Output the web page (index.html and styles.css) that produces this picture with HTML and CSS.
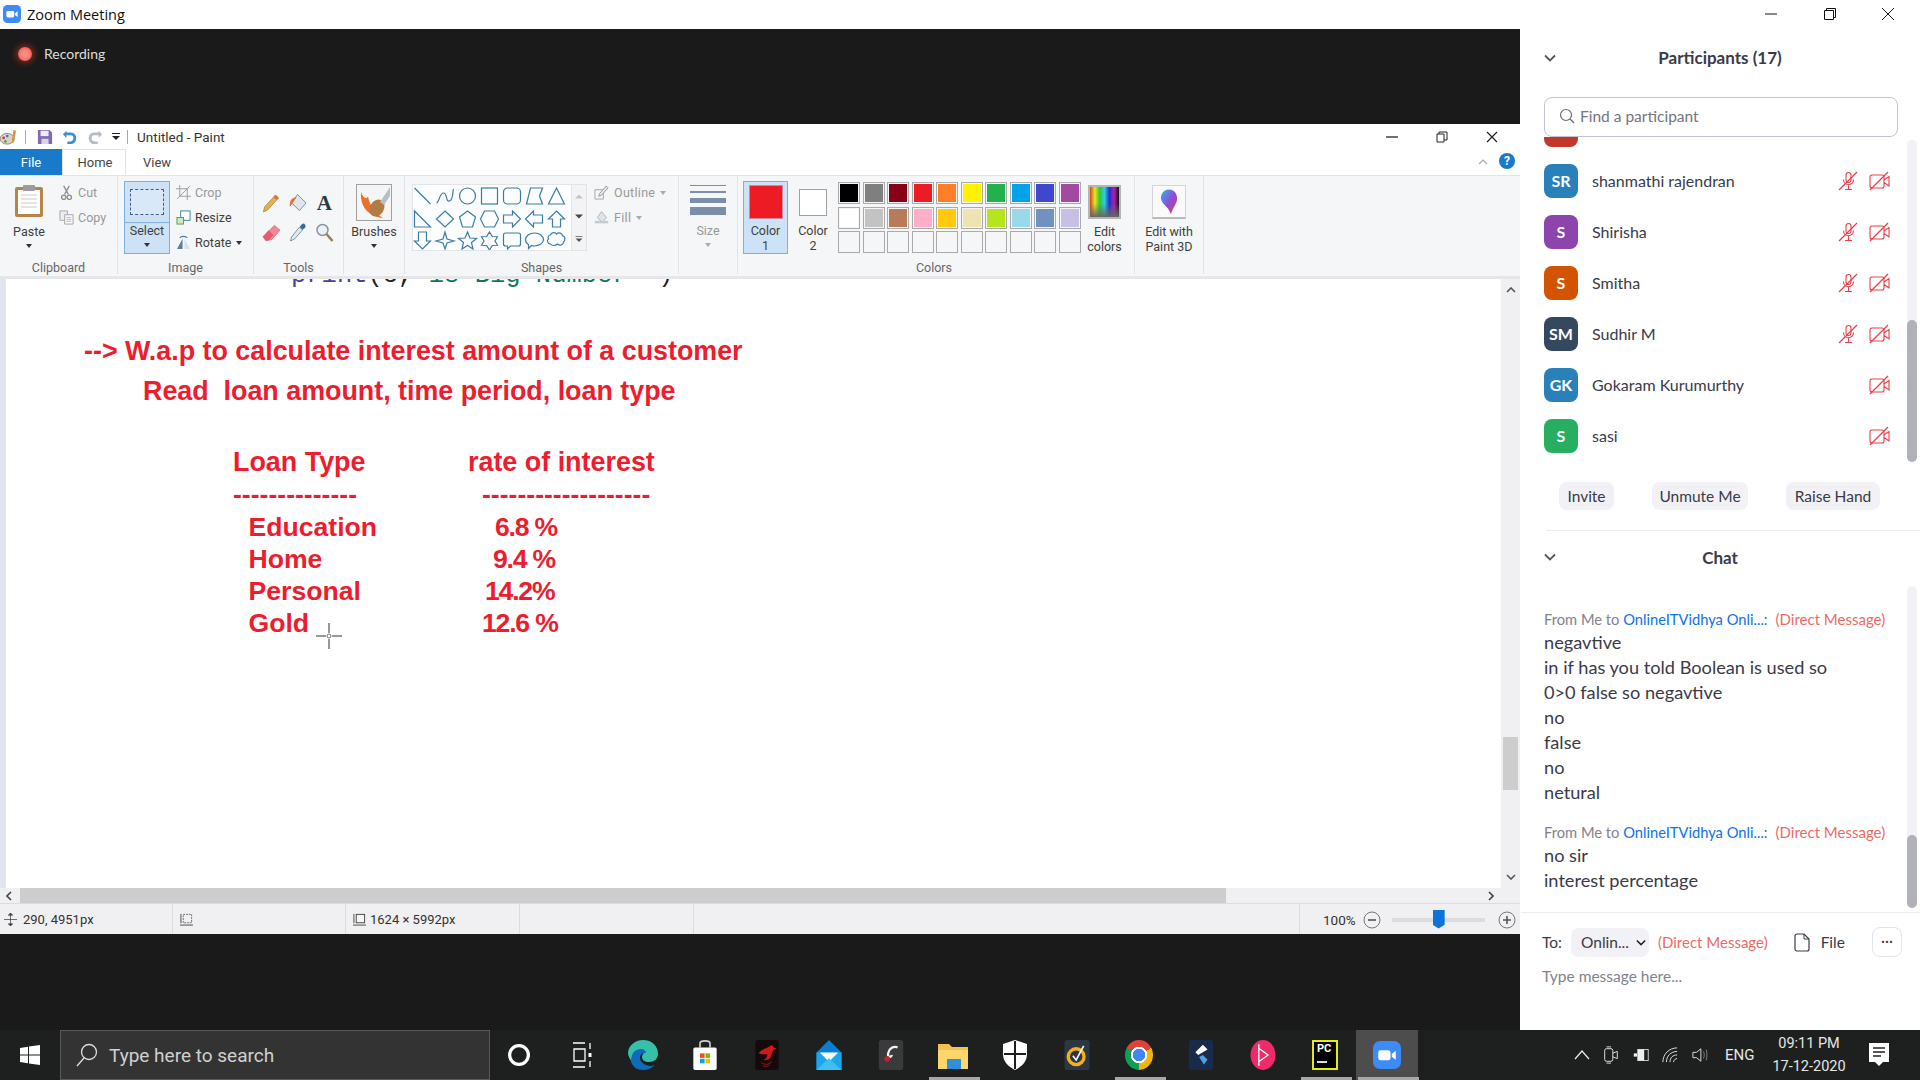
FILE: index.html
```html
<!DOCTYPE html>
<html lang="en">
<head>
    <meta charset="UTF-8">
    <title>Zoom Meeting</title>
    <link rel="stylesheet" href="styles.css">
</head>
<body>
    <svg class="defs" width="0" height="0">
        <symbol id="mic-off" viewBox="0 0 20 20">
            <g fill="none" stroke="#e8404a" stroke-width="1.1">
                <rect x="8" y="1.5" width="5" height="10" rx="2.5"/>
                <path d="M5.5 8.5c0 7 10 7 10 0M10.5 14v4M7 18.5h7"/>
                <path d="M19 1 1 19" stroke-width="1.3"/>
            </g>
        </symbol>
        <symbol id="video-off" viewBox="0 0 21 20">
            <g fill="none" stroke="#e8404a" stroke-width="1.1">
                <path d="M13 4H3a2 2 0 0 0-2 2v9a2 2 0 0 0 2 2h10a2 2 0 0 0 2-2V6a2 2 0 0 0-2-2zM15 9l5-3.500V15l-5-3.500"/>
                <path d="M19 1 1 19" stroke-width="1.300"/>
            </g>
        </symbol>
        <symbol id="chevron" viewBox="0 0 12 8">
            <path d="M1 1.500 6 6.500l5-5" fill="none" stroke="currentColor" stroke-width="1.800"/>
        </symbol>
        <symbol id="zoomcam" viewBox="0 0 32 32">
            <rect width="32" height="32" rx="8" fill="#3d8bf5"/>
            <rect x="6" y="10.500" width="14" height="11.500" rx="2.500" fill="#fff"/>
            <path d="M21.500 14.500 26 11v10.500l-4.500-3.500z" fill="#fff"/>
        </symbol>
    </svg>

    <div class="main">
        <div class="left">
            <div class="zoom-title">
                <svg class="zoom-logo"><use href="#zoomcam"/></svg>
                <span>Zoom Meeting</span>
            </div>
            <div class="rec-bar">
                <span class="rec-dot"></span>
                <span class="rec-text">Recording</span>
            </div>

            <div class="paint">
                <div class="paint-title">
                    <svg class="qa-icon qa-paint" viewBox="0 0 18 18">
                        <ellipse cx="7" cy="11" rx="8" ry="6" fill="#d9d3c4" stroke="#8a8272"/>
                        <circle cx="3" cy="10" r="1.500" fill="#d13b3b"/><circle cx="7" cy="8" r="1.500" fill="#3b78d1"/><circle cx="5" cy="14" r="1.500" fill="#4aa04a"/>
                        <path d="M14 1l3 1-3 14-2-1z" fill="#e2913a"/>
                    </svg>
                    <span class="qa-sep qa-sep-first"></span>
                    <svg class="qa-icon" viewBox="0 0 18 18">
                        <path d="M1 1h13l3 3v13H1z" fill="#7f6bb0"/><rect x="4" y="2" width="9" height="6" fill="#efeaf6"/><rect x="5" y="11" width="8" height="6" fill="#d9d3e8"/>
                    </svg>
                    <svg class="qa-icon" viewBox="0 0 18 18">
                        <path d="M5 2 1 6l4 4V7h5c4 0 4 7-1 7H6v3h4c8 0 8-13 0-13H5z" fill="#3a8fd9"/>
                    </svg>
                    <svg class="qa-icon" viewBox="0 0 18 18">
                        <path d="M13 2l4 4-4 4V7H8c-4 0-4 7 1 7h3v3H8C0 17 0 4 8 4h5z" fill="#b4bcc4"/>
                    </svg>
                    <svg class="qa-drop" viewBox="0 0 8 9"><path d="M0 1h8v1H0zM0 4h8L4 8z" fill="#222"/></svg>
                    <span class="qa-sep"></span>
                    <span class="paint-name">Untitled - Paint</span>
                    <div class="paint-controls">
                        <svg viewBox="0 0 12 12"><path d="M0 6h12" stroke="#222" stroke-width="1.300"/></svg>
                        <svg viewBox="0 0 12 12"><path d="M1 3h7v8H1zM3 3V1h8v8H8" fill="none" stroke="#222"/></svg>
                        <svg viewBox="0 0 12 12"><path d="M1 1l10 10M11 1 1 11" stroke="#222" stroke-width="1.200"/></svg>
                    </div>
                </div>

                <div class="paint-tabs">
                    <span class="tab tab-file">File</span>
                    <span class="tab tab-home">Home</span>
                    <span class="tab tab-view">View</span>
                    <svg class="tab-collapse" viewBox="0 0 10 6"><path d="M1 5l4-4 4 4" fill="none" stroke="#aaa" stroke-width="1.200"/></svg>
                    <span class="tab-help">?</span>
                </div>

                <div class="ribbon">
                    <div class="group g-clip">
                        <div class="group-body">
                            <div class="big-tool paste-tool">
                                <svg class="paste-icon" viewBox="0 0 30 34">
                                    <rect x="1" y="3" width="28" height="30" rx="2" fill="#b5854a"/>
                                    <rect x="4" y="6" width="22" height="24" fill="#fff"/>
                                    <path d="M7 11h16M7 15h16M7 19h16M7 23h16" stroke="#c9c9c9"/>
                                    <rect x="9" y="1" width="12" height="6" rx="1" fill="#9a9aa2"/>
                                </svg>
                                <span>Paste</span>
                                <i class="caret"></i>
                            </div>
                            <div class="small-col">
                                <div class="small-row off">
                                    <svg viewBox="0 0 14 16"><path d="M4 1l5 9M10 1 5 10" stroke="#8d8d8d" stroke-width="1.400" fill="none"/><circle cx="4" cy="13" r="2.300" fill="none" stroke="#8d8d8d" stroke-width="1.400"/><circle cx="10" cy="13" r="2.300" fill="none" stroke="#8d8d8d" stroke-width="1.400"/></svg>
                                    <span>Cut</span>
                                </div>
                                <div class="small-row off">
                                    <svg viewBox="0 0 16 16"><path d="M1 1h8v10H1z" fill="#eee" stroke="#a5a5a5"/><path d="M6 5h9v10H6z" fill="#f8f8f8" stroke="#a5a5a5"/><path d="M8 8h5M8 10h5M8 12h5" stroke="#bbb"/></svg>
                                    <span>Copy</span>
                                </div>
                            </div>
                        </div>
                        <div class="group-label">Clipboard</div>
                    </div>

                    <div class="group g-image">
                        <div class="group-body">
                            <div class="select-tool">
                                <div class="select-top"><span class="marquee"></span></div>
                                <div class="select-bottom">
                                    <span>Select</span>
                                    <i class="caret"></i>
                                </div>
                            </div>
                            <div class="small-col">
                                <div class="small-row off">
                                    <svg viewBox="0 0 16 16"><path d="M4 0v12h12M0 4h12v12M1 15 15 1" fill="none" stroke="#9a9a9a"/></svg>
                                    <span>Crop</span>
                                </div>
                                <div class="small-row">
                                    <svg viewBox="0 0 16 16"><rect x="5" y="1" width="10" height="10" fill="#fff" stroke="#2f7f9a"/><rect x="1" y="8" width="7" height="7" fill="#cfe6c5" stroke="#5d9a4a"/></svg>
                                    <span>Resize</span>
                                </div>
                                <div class="small-row">
                                    <svg viewBox="0 0 16 16"><path d="M7 15H1L7 4z" fill="#5f7f95"/><path d="M9 15h6L9 4z" fill="#d7e3ea"/><path d="M4 3c2-2 6-2 8 0" fill="none" stroke="#2f7f9a" stroke-width="1.300"/></svg>
                                    <span>Rotate</span>
                                    <i class="caret caret-inline"></i>
                                </div>
                            </div>
                        </div>
                        <div class="group-label">Image</div>
                    </div>

                    <div class="group g-tools">
                        <div class="tools-grid">
                            <svg viewBox="0 0 18 20"><path d="M13 2l3 3L5 17l-4 2 1-5z" fill="#e7b04a" stroke="#9c7a30" stroke-width=".7"/><path d="M13 2l3 3-2 2-3-3z" fill="#e06a5a"/></svg>
                            <svg viewBox="0 0 20 20"><path d="M10 1l9 9-7 8-8-8z" fill="#dfe7ee" stroke="#7b8a97"/><path d="M9 4C4 4 1 8 2 14l3-4z" fill="#e0763c"/></svg>
                            <span class="tool-a">A</span>
                            <svg viewBox="0 0 20 18"><path d="M13 1l6 5-9 10-6 1-3-4z" fill="#ee8a96" stroke="#c95c6a" stroke-width=".7"/><path d="M1 13l6-7 5 5-5 6H4z" fill="#e85a6e"/></svg>
                            <svg viewBox="0 0 18 20"><path d="M16 1c2 2 1 4-1 5l-1 1-3-3 1-1c1-2 3-3 4-2z" fill="#2f6fa8"/><path d="M11 4l3 3-8 9-4 2 1-4z" fill="#dfe9f2" stroke="#6b7f92" stroke-width=".8"/></svg>
                            <svg viewBox="0 0 18 20"><circle cx="7" cy="7" r="5.500" fill="#eaf2f8" stroke="#8b949c" stroke-width="1.500"/><path d="M11 11l6 7" stroke="#9c7a50" stroke-width="2.500"/></svg>
                        </div>
                        <div class="group-label">Tools</div>
                    </div>

                    <div class="group g-brushes">
                        <div class="group-body">
                            <div class="big-tool">
                                <svg class="brush-icon" viewBox="0 0 36 37">
                                    <rect x=".5" y=".5" width="35" height="36" fill="#f5f5f5" stroke="#a0a0a0"/>
                                    <path d="M5 8c-1 14 6 24 22 26-9-6-14-14-15-22-1 4-5 2-7-4z" fill="#e8702a"/>
                                    <ellipse cx="21" cy="24" rx="7" ry="9" transform="rotate(30 21 24)" fill="#b27a45"/>
                                    <path d="M34 3 24 18l4 3 6-9z" fill="#b6bec8"/>
                                </svg>
                                <span>Brushes</span>
                                <i class="caret"></i>
                            </div>
                        </div>
                    </div>

                    <div class="group g-shapes">
                        <div class="group-body">
                            <div class="gallery">
                                <svg class="gallery-shapes" viewBox="1.500 0 158 65">
                                    <g fill="none" stroke="#3b7ca3" stroke-width="1.200">
                                        <path d="M3 3 19 19"/>
                                        <path d="M25 18c3-1 3-10 7-10s2 9 6 8 3-10 4-12"/>
                                        <circle cx="56" cy="11" r="8"/>
                                        <rect x="70" y="3" width="16" height="16"/>
                                        <rect x="92" y="3" width="17" height="16" rx="4"/>
                                        <path d="M115 19l4-16h12l-3 8 3 8z"/>
                                        <path d="M145 3l-8 16h16z"/>
                                        <path d="M3 26v16h16z"/>
                                        <path d="M33.500 26 42 34l-8.500 8L25 34z"/>
                                        <path d="M56 26l8 6-3 10H51l-3-10z"/>
                                        <path d="M73 26h10l4 8-4 8H73l-4-8z"/>
                                        <path d="M92 30h9v-4l8 8-8 8v-4h-9z"/>
                                        <path d="M131 30h-9v-4l-8 8 8 8v-4h9z"/>
                                        <path d="M145 26l8 8h-4v8h-8v-8h-4z"/>
                                        <path d="M7 47h8v9h4l-8 8-8-8h4z"/>
                                        <path d="M33.500 47l2 7 7 2-7 2-2 6-2-6-7-2 7-2z"/>
                                        <path d="M56 47l2.500 6 6.500.5-5 4 1.500 6.500-5.500-3.500-5.500 3.500 1.500-6.500-5-4 6.500-.5z"/>
                                        <path d="M78 47l2.800 4.500 5.200.2-2.500 4.300 2.500 4.300-5.200.2L78 65l-2.800-4.500-5.200-.2 2.500-4.300-2.500-4.300 5.200-.2z"/>
                                        <path d="M94 48h13a2 2 0 0 1 2 2v9a2 2 0 0 1-2 2h-8l-3 3v-3h-2a2 2 0 0 1-2-2v-9a2 2 0 0 1 2-2z"/>
                                        <path d="M123 48c5 0 9 3 9 6.500s-4 6.500-9 6.500c-1 0-2 0-3-.5l-3 3v-4c-2-1-3-3-3-5 0-3.500 4-6.500 9-6.500z"/>
                                        <path d="M139 50c1-3 5-3 6-1 2-2 6-1 6 2 3 0 3 5 1 6 0 3-4 4-6 2-2 2-6 2-7 0-3 0-4-4-2-5-1-2 0-4 2-4z"/>
                                    </g>
                                </svg>
                                <div class="gallery-scroll">
                                    <svg viewBox="0 0 8 5"><path d="M0 5l4-4 4 4z" fill="#c4c4c4"/></svg>
                                    <svg viewBox="0 0 8 5"><path d="M0 0l4 4 4-4z" fill="#444"/></svg>
                                    <svg viewBox="0 0 8 7"><path d="M0 0h8v1H0zM0 3h8L4 7zM0 2h8" fill="#555"/></svg>
                                </div>
                            </div>
                            <div class="small-col">
                                <div class="small-row off">
                                    <svg viewBox="0 0 16 16"><path d="M1 5h9v10H1z" fill="none" stroke="#a5a5a5"/><path d="M13 1l2 2-7 8-3 1 1-3z" fill="#e5e5e5" stroke="#9a9a9a"/></svg>
                                    <span>Outline</span>
                                    <i class="caret caret-inline caret-off"></i>
                                </div>
                                <div class="small-row off">
                                    <svg viewBox="0 0 18 16"><path d="M9 1l6 7-5 6-6-6z" fill="#dfe4e8" stroke="#a3acb4"/><rect x="1" y="12" width="16" height="3" fill="#c3cad0"/></svg>
                                    <span>Fill</span>
                                    <i class="caret caret-inline caret-off"></i>
                                </div>
                            </div>
                        </div>
                        <div class="group-label">Shapes</div>
                    </div>

                    <div class="group g-size">
                        <div class="group-body">
                            <div class="big-tool off">
                                <div class="size-lines">
                                    <span class="s1"></span><span class="s2"></span><span class="s3"></span><span class="s4"></span>
                                </div>
                                <span>Size</span>
                                <i class="caret caret-off"></i>
                            </div>
                        </div>
                    </div>

                    <div class="group g-colors">
                        <div class="group-body">
                            <div class="color-btn color-on">
                                <span class="color-swatch red"></span>
                                <span class="color-text">Color<br>1</span>
                            </div>
                            <div class="color-btn">
                                <span class="color-swatch small"></span>
                                <span class="color-text">Color<br>2</span>
                            </div>
                            <div class="palette">
                                <i class="c-black"></i><i class="c-grey"></i><i class="c-maroon"></i><i class="c-red"></i><i class="c-orange"></i><i class="c-yellow"></i><i class="c-green"></i><i class="c-cyan"></i><i class="c-indigo"></i><i class="c-purple"></i>
                                <i class="c-white"></i><i class="c-silver"></i><i class="c-brown"></i><i class="c-rose"></i><i class="c-gold"></i><i class="c-cream"></i><i class="c-lime"></i><i class="c-sky"></i><i class="c-steel"></i><i class="c-lavender"></i>
                                <i></i><i></i><i></i><i></i><i></i><i></i><i></i><i></i><i></i><i></i>
                            </div>
                            <div class="big-tool edit-colors">
                                <span class="rainbow"></span>
                                <span class="two-lines">Edit<br>colors</span>
                            </div>
                        </div>
                        <div class="group-label">Colors</div>
                    </div>

                    <div class="group g-3d">
                        <div class="group-body">
                            <div class="big-tool">
                                <span class="p3d-box">
                                    <svg viewBox="0 0 20 30">
                                        <defs><linearGradient id="p3d" x1="0" y1="0" x2="1" y2="1"><stop offset="0" stop-color="#34b5f0"/><stop offset=".5" stop-color="#8a4fd8"/><stop offset="1" stop-color="#f0305a"/></linearGradient></defs>
                                        <path d="M10 1c6 0 9 5 9 10 0 6-5 10-7 18-1-8-10-11-11-18C1 6 4 1 10 1z" fill="url(#p3d)"/>
                                    </svg>
                                </span>
                                <span class="two-lines">Edit with<br>Paint 3D</span>
                            </div>
                        </div>
                    </div>
                </div>

                <div class="canvas-row">
                    <div class="canvas">
                        <div class="doc-code"><span class="code-fn">print</span>(c,<span class="code-str">"is Big Number"</span> )</div>
                        <div class="doc-line doc-q1">--&gt; W.a.p to calculate interest amount of a customer</div>
                        <div class="doc-line doc-q2">Read&nbsp; loan amount, time period, loan type</div>
                        <div class="loan-table">
                            <div class="doc-line th">Loan Type</div><div class="doc-line th th2">rate of interest</div>
                            <div class="doc-line dash">--------------</div><div class="doc-line dash dash2">-------------------</div>
                            <div class="doc-line name">Education</div><div class="doc-line rate r1">6.8 %</div>
                            <div class="doc-line name">Home</div><div class="doc-line rate r2">9.4 %</div>
                            <div class="doc-line name">Personal</div><div class="doc-line rate r3">14.2%</div>
                            <div class="doc-line name">Gold</div><div class="doc-line rate r4">12.6 %</div>
                        </div>
                        <svg class="crosshair" viewBox="0 0 26 26">
                            <path d="M13 0v10M13 16v10M0 13h10M16 13h10" stroke="#333"/>
                            <circle cx="13" cy="13" r="2" fill="none" stroke="#555" stroke-width=".8"/>
                        </svg>
                    </div>
                    <div class="v-scroll">
                        <svg viewBox="0 0 10 6"><path d="M1 5l4-4 4 4" fill="none" stroke="#555" stroke-width="1.600"/></svg>
                        <span class="v-thumb"></span>
                        <svg viewBox="0 0 10 6"><path d="M1 1l4 4 4-4" fill="none" stroke="#555" stroke-width="1.600"/></svg>
                    </div>
                </div>

                <div class="h-scroll">
                    <svg viewBox="0 0 6 10"><path d="M5 1 1 5l4 4" fill="none" stroke="#444" stroke-width="1.600"/></svg>
                    <span class="h-thumb"></span>
                    <svg class="h-right" viewBox="0 0 6 10"><path d="M1 1l4 4-4 4" fill="none" stroke="#444" stroke-width="1.600"/></svg>
                </div>

                <div class="status">
                    <div class="st st-pos">
                        <svg viewBox="0 0 12 12"><path d="M6 0v12M0 6h12M6 0 4 2h4zM6 12l-2-2h4z" stroke="#444" fill="#444" stroke-width=".7"/></svg>
                        <span>290, 4951px</span>
                    </div>
                    <div class="st st-sel">
                        <svg viewBox="0 0 14 14"><rect x="3.500" y="1.500" width="9" height="9" fill="none" stroke="#666" stroke-dasharray="2 1"/><path d="M1 1v10M0 13h14" stroke="#444"/></svg>
                    </div>
                    <div class="st st-size">
                        <svg viewBox="0 0 14 14"><rect x="3.500" y="1.500" width="9" height="9" fill="#f5f5f5" stroke="#444"/><path d="M1 1v10M0 13h14" stroke="#444"/></svg>
                        <span>1624 × 5992px</span>
                    </div>
                    <div class="st st-empty"></div>
                    <div class="st st-empty2"></div>
                    <div class="st st-zoom">
                        <span>100%</span>
                        <svg class="zoom-btn" viewBox="0 0 18 18"><circle cx="9" cy="9" r="8" fill="none" stroke="#777"/><path d="M5 9h8" stroke="#555" stroke-width="1.600"/></svg>
                        <div class="zoom-slider"><span class="zoom-thumb"></span></div>
                        <svg class="zoom-btn zoom-plus" viewBox="0 0 18 18"><circle cx="9" cy="9" r="8" fill="none" stroke="#777"/><path d="M5 9h8M9 5v8" stroke="#555" stroke-width="1.600"/></svg>
                    </div>
                </div>
            </div>

            <div class="black-bottom"></div>
        </div>

        <div class="panel">
            <div class="win-controls">
                <svg viewBox="0 0 12 12"><path d="M0 6h12" stroke="#111" stroke-width="1"/></svg>
                <svg viewBox="0 0 12 12"><path d="M.5 2.500h9v9h-9zM2.500 2.500v-2h9v9h-2" fill="none" stroke="#111"/></svg>
                <svg viewBox="0 0 12 12"><path d="M0 0l12 12M12 0 0 12" stroke="#111"/></svg>
            </div>

            <div class="section-head">
                <svg><use href="#chevron"/></svg>
                <span>Participants (17)</span>
            </div>

            <div class="search">
                <svg viewBox="0 0 16 16"><circle cx="7" cy="7" r="5.500" fill="none" stroke="#6a6a78" stroke-width="1.200"/><path d="M11 11l4 4" stroke="#6a6a78" stroke-width="1.200"/></svg>
                <span>Find a participant</span>
            </div>

            <div class="list-wrap">
                <div class="list">
                    <div class="person first"><span class="avatar a-red"></span><span class="pname"></span></div>
                    <div class="person"><span class="avatar a-blue">SR</span><span class="pname">shanmathi rajendran</span><svg class="ic-mic"><use href="#mic-off"/></svg><svg class="ic-vid"><use href="#video-off"/></svg></div>
                    <div class="person"><span class="avatar a-purple">S</span><span class="pname">Shirisha</span><svg class="ic-mic"><use href="#mic-off"/></svg><svg class="ic-vid"><use href="#video-off"/></svg></div>
                    <div class="person"><span class="avatar a-orange">S</span><span class="pname">Smitha</span><svg class="ic-mic"><use href="#mic-off"/></svg><svg class="ic-vid"><use href="#video-off"/></svg></div>
                    <div class="person"><span class="avatar a-navy">SM</span><span class="pname">Sudhir M</span><svg class="ic-mic"><use href="#mic-off"/></svg><svg class="ic-vid"><use href="#video-off"/></svg></div>
                    <div class="person"><span class="avatar a-blue">GK</span><span class="pname">Gokaram Kurumurthy</span><svg class="ic-vid"><use href="#video-off"/></svg></div>
                    <div class="person"><span class="avatar a-green">S</span><span class="pname">sasi</span><svg class="ic-vid"><use href="#video-off"/></svg></div>
                </div>
                <div class="track track-list"><span class="thumb"></span></div>
            </div>

            <div class="actions">
                <span class="act act-invite">Invite</span>
                <span class="act act-unmute">Unmute Me</span>
                <span class="act act-raise">Raise Hand</span>
            </div>

            <div class="rule rule-chat"></div>

            <div class="section-head chat-head">
                <svg><use href="#chevron"/></svg>
                <span>Chat</span>
            </div>

            <div class="chat-wrap">
                <div class="chat">
                    <div class="msg-head">From Me to <span class="to">OnlineITVidhya Onli...:</span><span class="dm">(Direct Message)</span></div>
                    <div class="msg">negavtive</div>
                    <div class="msg">in if has you told Boolean is used so</div>
                    <div class="msg">0&gt;0 false so negavtive</div>
                    <div class="msg">no</div>
                    <div class="msg">false</div>
                    <div class="msg">no</div>
                    <div class="msg">netural</div>
                    <div class="msg-head second">From Me to <span class="to">OnlineITVidhya Onli...:</span><span class="dm">(Direct Message)</span></div>
                    <div class="msg">no sir</div>
                    <div class="msg">interest percentage</div>
                </div>
                <div class="track track-chat"><span class="thumb"></span></div>
            </div>

            <div class="rule rule-compose"></div>

            <div class="compose">
                <span class="to-label">To:</span>
                <span class="to-select">Onlin...<svg><use href="#chevron"/></svg></span>
                <span class="to-dm">(Direct Message)</span>
                <svg class="file-icon" viewBox="0 0 16 19"><path d="M3 1h7l5 5v10a2 2 0 0 1-2 2H3a2 2 0 0 1-2-2V3a2 2 0 0 1 2-2z" fill="none" stroke="#3c3c48" stroke-width="1.200"/><path d="M10 1v5h5" fill="none" stroke="#3c3c48" stroke-width="1"/></svg>
                <span class="file-label">File</span>
                <span class="more">···</span>
            </div>
            <div class="type-here">Type message here...</div>
        </div>
    </div>

    <div class="taskbar">
        <svg class="start" viewBox="0 0 20 20"><path d="M0 3l8-1.200V9.500H0zM9 1.600 20 0v9.500H9zM0 10.500h8v7.700L0 17zM9 10.500h11V20L9 18.400z" fill="#fff"/></svg>
        <div class="task-search">
            <svg viewBox="0 0 22 24"><circle cx="13" cy="9" r="7.500" fill="none" stroke="#ddd" stroke-width="1.300"/><path d="M8 15 1 23" stroke="#ddd" stroke-width="1.300"/></svg>
            <span>Type here to search</span>
        </div>
        <div class="task-icons">
            <span class="ti"><svg viewBox="0 0 24 24"><circle cx="12" cy="12" r="7.500" fill="none" stroke="#fff" stroke-width="2.600"/></svg></span>
            <span class="ti"><svg viewBox="0 0 30 30"><path d="M7 3h12M7 27h12M24 3v6M24 21v6M8 9h11v12H8z" fill="none" stroke="#fff" stroke-width="1.300"/><rect x="22.500" y="13" width="3" height="4" fill="#fff"/></svg></span>
            <span class="ti"><svg viewBox="0 0 30 30"><path d="M15 0c9 0 15 6 15 14 0 5-4 8-9 8-4 0-7-2-7-5 0-2 1-3 2-4-6-1-11 3-12 9-2-3-4-6-4-9C0 6 7 0 15 0z" fill="#35c1a8"/><path d="M3 22C3 12 8 9 13 9c3 0 5 2 5 4-3 0-6 1-6 5s5 8 11 8c2 0 3-1 4-1-3 3-7 5-12 5-6 0-10-3-12-8z" fill="#0f6ab8"/></svg></span>
            <span class="ti"><svg viewBox="0 0 28 36"><path d="M8 9V4c0-4 12-4 12 0v5" fill="none" stroke="#ccc" stroke-width="2"/><rect y="9" width="28" height="27" rx="2" fill="#fff"/><rect x="8" y="16" width="5.500" height="5.500" fill="#f25022"/><rect x="14.500" y="16" width="5.500" height="5.500" fill="#7fba00"/><rect x="8" y="22.500" width="5.500" height="5.500" fill="#00a4ef"/><rect x="14.500" y="22.500" width="5.500" height="5.500" fill="#ffb900"/></svg></span>
            <span class="ti"><svg viewBox="0 0 28 36"><rect width="28" height="36" rx="3" fill="#16090b"/><path d="M4 16c3-4 6-5 9-6l7-4 2 3 3 1-4 3-2 6c-1 4-5 6-9 5 3-2 5-4 4-7-3 0-7 1-10-1z" fill="#d3161c"/><path d="M7 27c4 3 9 3 13-1M9 31c3 1 6 1 8-1" fill="none" stroke="#c0141a"/></svg></span>
            <span class="ti"><svg viewBox="0 0 30 36"><path d="M15 0 30 15v21H0V15z" fill="#0a7fd1"/><path d="M0 15h30v21H0z" fill="#1ca6ea"/><path d="M4 15h22l-11 11z" fill="#fff"/><path d="M0 36l15-14 15 14z" fill="#3cc0f0"/></svg></span>
            <span class="ti"><svg viewBox="0 0 26 32"><rect width="26" height="32" rx="3" fill="#3a3a3c"/><path d="M20 8c-4-2-9 1-10 6s3 5 4 2" fill="none" stroke="#f2f2f2" stroke-width="2.500"/><circle cx="9" cy="20" r="3" fill="#c8202a"/></svg></span>
            <span class="ti"><svg viewBox="0 0 30 28"><path d="M0 3h11l3 3h16v22H0z" fill="#f2c14e"/><path d="M0 9h30v19H0z" fill="#fbd66a"/><rect x="9" y="18" width="14" height="10" fill="#2f8fd8"/></svg></span>
            <span class="ti"><svg viewBox="0 0 30 30"><path d="M15 0l12 4v10c0 8-6 13-12 16C9 27 3 22 3 14V4z" fill="#fff"/><path d="M14 1h2v28h-2zM4 13h22v2H4z" fill="#1e1e1e"/></svg></span>
            <span class="ti"><svg viewBox="0 0 30 36"><rect width="30" height="36" rx="3" fill="#2c3742"/><circle cx="14" cy="20" r="9.500" fill="none" stroke="#f6b01e" stroke-width="4"/><path d="M10 19l4 5 9-17" fill="none" stroke="#f2f2f2" stroke-width="2"/></svg></span>
            <span class="ti"><span class="chrome"></span></span>
            <span class="ti"><svg viewBox="0 0 26 32"><rect width="26" height="32" rx="3" fill="#1a2a4a"/><path d="M15 5l5 5-10 6-3-3z" fill="#fff"/><path d="M11 18l4-2 5 5-4 5z" fill="#4aa3e0"/></svg></span>
            <span class="ti"><svg viewBox="0 0 30 36"><ellipse cx="15" cy="18" rx="15" ry="18" fill="#ee2a6a"/><path d="M10 10l11 8-11 8zM10 5v26" fill="none" stroke="#fff" stroke-width="1.600"/></svg></span>
            <span class="ti"><span class="pc-logo"><b>PC</b><i></i></span></span>
            <span class="ti ti-active"><svg class="ti-zoom"><use href="#zoomcam"/></svg></span>
            <span class="run run-files"></span>
            <span class="run run-chrome"></span>
            <span class="run run-pc"></span>
            <span class="run run-zoom"></span>
        </div>
        <div class="tray">
            <svg class="tray-ic" viewBox="0 0 16 16"><path d="M1 12l7-8 7 8" fill="none" stroke="#eee" stroke-width="1.200"/></svg>
            <svg class="tray-ic" viewBox="0 0 16 20"><rect x="1" y="3" width="9" height="14" rx="2" fill="none" stroke="#eee"/><path d="M10 8l5-2v8l-5-2M3 1h5M3 19h5" fill="none" stroke="#eee"/></svg>
            <svg class="tray-ic" viewBox="0 0 20 16"><rect x="6" y="1" width="13" height="14" fill="none" stroke="#eee"/><rect x="6" y="1" width="8" height="14" fill="#eee"/><path d="M1 6h4v4H1z" fill="#eee"/></svg>
            <svg class="tray-ic" viewBox="0 0 18 18"><path d="M1 17C1 8 8 1 17 1M5 17C5 10 10 5 17 5M9 17c0-5 3-8 8-8M13 17c0-2 2-4 4-4" fill="none" stroke="#eee"/></svg>
            <svg class="tray-ic tray-last" viewBox="0 0 18 18"><path d="M1 6h4l5-4v14l-5-4H1z" fill="none" stroke="#eee"/><path d="M13 5c1 3 1 5 0 8M16 3c1 4 1 8 0 12" fill="none" stroke="#888"/></svg>
            <span class="eng">ENG</span>
            <span class="clock">09:11 PM<br>17-12-2020</span>
            <svg class="notif" viewBox="0 0 20 24"><path d="M0 0h20v19h-6l-4 4-4-4H0z" fill="#fff"/><path d="M4 5h12M4 9h12M4 13h8" stroke="#222" stroke-width="1.300"/></svg>
        </div>
    </div>
</body>
</html>
```

FILE: styles.css
```css
* {
    box-sizing: border-box;
}

body {
    margin: 0;
    width: 1920px;
    height: 1080px;
    overflow: hidden;
    font-family: Roboto, "Liberation Sans", sans-serif;
    background: #1a1a1a;
}

.defs {
    position: absolute;
}

.main {
    display: flex;
    height: 1030px;
}

.left {
    width: 1520px;
    display: flex;
    flex-direction: column;
}

/* zoom window top */
.zoom-title {
    height: 29px;
    background: #fff;
    display: flex;
    align-items: center;
    padding: 0 0 1px 3px;
    font-size: 14.500px;
    color: #111;
    font-family: "Open Sans", sans-serif;
}

.zoom-logo {
    width: 18px;
    height: 18px;
    margin-right: 6px;
}

.rec-bar {
    height: 95px;
    background: #1a1a1a;
    display: flex;
    align-items: flex-start;
    padding: 18px 0 0 18px;
}

.rec-dot {
    width: 14px;
    height: 14px;
    border-radius: 50%;
    background: radial-gradient(circle, #fa8a80 0 30%, #ee4a40 100%);
    box-shadow: 0 0 6px 2px rgba(200, 60, 30, 0.6);
}

.rec-text {
    margin-left: 12px;
    font-family: Lato, sans-serif;
    font-size: 14px;
    line-height: 14px;
    color: #ddd;
}

.black-bottom {
    flex: 1;
    background: #1a1a1a;
}

/* paint window */
.paint {
    height: 810px;
    display: flex;
    flex-direction: column;
    background: #fff;
}

.paint-title {
    height: 25px;
    display: flex;
    align-items: center;
    font-size: 13.500px;
    color: #333;
}

.qa-icon {
    width: 16px;
    height: 16px;
    margin-right: 9px;
    flex: none;
}

.qa-paint {
    width: 18px;
    margin-right: 7px;
}

.qa-sep {
    width: 1px;
    height: 14px;
    background: #aaa;
    margin-right: 9px;
}

.qa-sep-first {
    margin-right: 11px;
}

.qa-drop {
    width: 8px;
    height: 9px;
    margin: 0 7px 0 0;
}

.paint-controls {
    margin-left: auto;
    display: flex;
    gap: 38px;
    padding-right: 22px;
}

.paint-controls svg {
    width: 12px;
    height: 12px;
}

.paint-tabs {
    height: 26px;
    display: flex;
    align-items: stretch;
    font-size: 13px;
    color: #444;
    position: relative;
}

.tab {
    display: flex;
    align-items: center;
    justify-content: center;
}

.tab-file {
    width: 62px;
    background: #1979ca;
    color: #fff;
}

.tab-home {
    width: 64px;
    border: 1px solid #e2e2e2;
    border-bottom: none;
    padding-left: 2px;
}

.tab-view {
    width: 62px;
}

.tab-collapse {
    width: 10px;
    height: 6px;
    margin: 10px 0 0 1290px;
}

.tab-help {
    width: 16px;
    height: 16px;
    margin: 4px 0 0 11px;
    border-radius: 50%;
    background: #1979ca;
    color: #fff;
    font-size: 12px;
    font-weight: 700;
    line-height: 16px;
    text-align: center;
}

.ribbon {
    height: 104px;
    display: flex;
    background: #f5f6f7;
    border-top: 1px solid #e4e4e6;
    border-bottom: 3px solid #e6e6e9;
    font-size: 12.500px;
    color: #3f3f3f;
    flex: none;
}

.group {
    position: relative;
    height: 98px;
    display: flex;
    flex-direction: column;
    border-right: 1px solid #e2e3e6;
    flex: none;
}

.group-body {
    display: flex;
    height: 84px;
    flex: none;
}

.group-label {
    height: 14px;
    line-height: 16px;
    text-align: center;
    color: #666;
    font-size: 12.500px;
}

.g-clip { width: 118px; }
.g-image { width: 136px; }
.g-tools { width: 90px; }
.g-brushes { width: 61px; }
.g-shapes { width: 274px; }
.g-size { width: 59px; }
.g-colors { width: 397px; }
.g-3d { width: 69px; }

.big-tool {
    display: flex;
    flex-direction: column;
    align-items: center;
    text-align: center;
    padding-top: 8px;
}

.big-tool span {
    line-height: 16px;
}

.caret {
    display: block;
    width: 0;
    height: 0;
    margin-top: 4px;
    border-left: 3px solid transparent;
    border-right: 3px solid transparent;
    border-top: 4px solid #333;
}

.caret-inline {
    display: inline-block;
    margin: 0 0 0 5px;
}

.caret-off {
    border-top-color: #aaa;
}

.off,
.off span {
    color: #999;
}

.paste-tool {
    width: 42px;
    margin-left: 8px;
}

.paste-icon {
    width: 30px;
    height: 34px;
    margin-bottom: 6px;
}

.small-col {
    padding-top: 4px;
    margin-left: 8px;
}

.small-row {
    height: 25px;
    display: flex;
    align-items: center;
    white-space: nowrap;
}

.small-row svg {
    width: 15px;
    height: 15px;
    margin-right: 4px;
    flex: none;
}

.g-clip .small-col {
    margin-left: 9px;
}

/* select button */
.select-tool {
    width: 46px;
    height: 73px;
    margin: 5px 0 0 6px;
    border: 1px solid #7fb0dc;
    background: #cde2f6;
    text-align: center;
    display: flex;
    flex-direction: column;
    align-items: center;
    flex: none;
}

.select-top {
    width: 100%;
    height: 41px;
    border-bottom: 1px solid #7fb0dc;
    padding-top: 7px;
}

.marquee {
    display: block;
    width: 34px;
    height: 26px;
    margin: 0 auto;
    border: 1px dashed #3b5f8f;
    background: #d8e8f8;
}

.select-bottom {
    display: flex;
    flex-direction: column;
    align-items: center;
    line-height: 16px;
}

.g-image .small-col {
    margin-left: 6px;
}

/* tools */
.tools-grid {
    display: grid;
    grid-template-columns: repeat(3, 26.500px);
    grid-template-rows: 30px 30px;
    align-items: center;
    justify-items: center;
    padding: 12px 0 0 4px;
    height: 84px;
}

.tools-grid svg {
    width: 19px;
    height: 20px;
}

.tool-a {
    font-family: "Liberation Serif", serif;
    font-weight: 700;
    font-size: 21px;
    color: #2b3a4a;
}

.brush-icon {
    width: 36px;
    height: 37px;
    margin-bottom: 3px;
}

.g-brushes .big-tool {
    width: 100%;
}

/* shapes */
.gallery {
    width: 175px;
    height: 67px;
    margin: 8px 0 0 7px;
    background: #fcfdfe;
    border: 1px solid #e2e4e8;
    display: flex;
    flex: none;
}

.gallery-shapes {
    width: 158px;
    height: 65px;
}

.gallery-scroll {
    width: 15px;
    margin-left: auto;
    border-left: 1px solid #e5e5e8;
    background: #f3f3f5;
    display: flex;
    flex-direction: column;
    justify-content: space-around;
    align-items: center;
}

.gallery-scroll svg {
    width: 8px;
    height: 6px;
}

.g-shapes .small-col {
    margin-left: 7px;
    letter-spacing: 0.3px;
}

.g-shapes .small-row svg {
    margin-right: 5px;
}

/* size */
.g-size .big-tool {
    width: 100%;
}

.size-lines {
    width: 36px;
    height: 31px;
    margin-top: 1px;
    margin-bottom: 7px;
}

.size-lines span {
    display: block;
    background: #7d8eab;
}

.s1 { height: 1px; margin-bottom: 5px; }
.s2 { height: 2px; margin-bottom: 5px; }
.s3 { height: 5px; margin-bottom: 4px; }
.s4 { height: 8px; }

/* colors */
.color-btn {
    width: 45px;
    height: 73px;
    margin: 5px 0 0 5px;
    display: flex;
    flex-direction: column;
    align-items: center;
    text-align: center;
    flex: none;
    border: 1px solid transparent;
}

.color-on {
    background: #cde2f6;
    border-color: #7fb0dc;
}

.color-btn + .color-btn {
    width: 40px;
    margin-left: 5px;
}

.color-swatch {
    width: 34px;
    height: 35px;
    margin-top: 3px;
    border: 1px solid #c98aa0;
    padding: 0;
}

.color-swatch.red {
    background: #ed1c24;
}

.color-swatch.small {
    width: 28px;
    height: 28px;
    margin: 7px 0 3px;
    background: #fff;
    border: 1px solid #a0a0a0;
}

.color-text {
    line-height: 15px;
    margin-top: 4px;
}

.palette {
    display: grid;
    grid-template-columns: repeat(10, 22px);
    grid-template-rows: repeat(3, 22px);
    gap: 2.500px;
    margin: 6px 0 0 5px;
    flex: none;
}

.palette i {
    display: block;
    background: #fff;
    border: 2px solid #f5f6f7;
    outline: 1px solid #aaa;
    outline-offset: -1px;
}

.palette i:nth-child(n + 21) {
    background: #f5f6f7;
}

.c-black { background: #000 !important; }
.c-grey { background: #7f7f7f !important; }
.c-maroon { background: #880015 !important; }
.c-red { background: #ed1c24 !important; }
.c-orange { background: #ff7f27 !important; }
.c-yellow { background: #fff200 !important; }
.c-green { background: #22b14c !important; }
.c-cyan { background: #00a2e8 !important; }
.c-indigo { background: #3f48cc !important; }
.c-purple { background: #a349a4 !important; }
.c-white { background: #fff !important; }
.c-silver { background: #c3c3c3 !important; }
.c-brown { background: #b97a57 !important; }
.c-rose { background: #ffaec9 !important; }
.c-gold { background: #ffc90e !important; }
.c-cream { background: #efe4b0 !important; }
.c-lime { background: #b5e61d !important; }
.c-sky { background: #99d9ea !important; }
.c-steel { background: #7092be !important; }
.c-lavender { background: #c8bfe7 !important; }

.edit-colors {
    width: 48px;
    padding-top: 9px;
    margin-left: 0;
}

.rainbow {
    display: block;
    width: 33px;
    height: 34px;
    border: 2px solid #b5b5b5;
    background:
        linear-gradient(to bottom, transparent 55%, #666),
        linear-gradient(to right, #c8481e, #f2e41e, #2ec82e, #2ed0e0, #2030d0, #b020b0, #111);
    margin-bottom: 5px;
}

.two-lines {
    line-height: 15px !important;
}

.g-colors .group-label {
    width: 392px;
}

.g-3d .big-tool {
    width: 100%;
    padding-top: 9px;
}

.p3d-box {
    width: 34px;
    height: 34px;
    background: #fafafa;
    border: 1px solid #d5d5d5;
    border-bottom: 2px solid #bbb;
    display: flex;
    align-items: center;
    justify-content: center;
    margin-bottom: 5px;
}

.p3d-box svg {
    width: 18px;
    height: 28px;
}

/* canvas */
.canvas-row {
    height: 609px;
    display: flex;
}

.canvas {
    position: relative;
    width: 1501px;
    overflow: hidden;
    background: #fff;
    border-left: 6px solid #dfe4ee;
}

.doc-code {
    height: 20px;
    margin-top: -13px;
    padding-left: 285px;
    font-family: "Liberation Mono", monospace;
    font-size: 25.500px;
    line-height: 20px;
    color: #222;
    white-space: pre;
}

.code-fn {
    color: #4b3fa0;
}

.code-str {
    color: #0a7a5e;
}

.doc-line {
    font-family: "Liberation Sans", Arial, sans-serif;
    font-weight: 700;
    font-size: 26.600px;
    color: #ed1c2e;
    white-space: pre;
}

.doc-q1 {
    height: 40px;
    line-height: 40px;
    margin-top: 45px;
    padding-left: 78px;
    font-size: 26.850px;
}

.doc-q2 {
    height: 40px;
    line-height: 40px;
    padding-left: 137px;
    font-size: 26.850px;
}

.loan-table {
    display: grid;
    grid-template-columns: 236px 1fr;
    grid-auto-rows: 32px;
    margin: 36px 0 0 227px;
}

.loan-table .doc-line {
    line-height: 32px;
}

.loan-table .th {
    line-height: 30px;
    font-size: 26.900px;
}

.loan-table .th2 {
    margin-left: -1px;
}

.loan-table .dash {
    line-height: 30px;
}

.name {
    padding-left: 15.500px;
}

.dash2 {
    padding-left: 13px;
}

.rate {
    letter-spacing: -1.200px;
}

.r1 { padding-left: 26px; }
.r2 { padding-left: 24px; }
.r3 { padding-left: 16px; }
.r4 { padding-left: 13px; }

.crosshair {
    position: absolute;
    left: 310px;
    top: 344px;
    width: 26px;
    height: 26px;
}

.v-scroll {
    width: 19px;
    background: #f0f0f2;
    display: flex;
    flex-direction: column;
    align-items: center;
    padding-top: 8px;
}

.v-scroll svg {
    width: 10px;
    height: 6px;
    flex: none;
}

.v-thumb {
    width: 15px;
    height: 53px;
    margin: 444px 0 84px;
    background: #cdcdcd;
}

.h-scroll {
    height: 16px;
    display: flex;
    align-items: center;
    background: #f0f0f2;
    padding-left: 6px;
    border-bottom: 1px solid #dcdcde;
}

.h-scroll svg {
    width: 6px;
    height: 10px;
    flex: none;
}

.h-thumb {
    width: 1206px;
    height: 15px;
    margin-left: 8px;
    background: #cdcdcd;
}

.h-right {
    margin-left: 262px;
}

.status {
    height: 30px;
    display: flex;
    align-items: center;
    background: #f0f0f2;
    font-size: 13px;
    color: #333;
}

.st {
    height: 100%;
    display: flex;
    align-items: center;
    padding-top: 1px;
    border-right: 1px solid #dcdcde;
    flex: none;
}

.st svg {
    width: 13px;
    height: 13px;
    flex: none;
}

.st-pos { width: 173px; padding-left: 4px; gap: 6px; }
.st-sel { width: 173px; padding-left: 7px; }
.st-size { width: 174px; padding-left: 7px; gap: 4px; }
.st-empty { width: 174px; }
.st-empty2 { width: 606px; }

.st-zoom {
    border: none;
    padding-left: 23px;
    font-size: 13.500px;
}

.st-zoom .zoom-btn {
    width: 18px;
    height: 18px;
    margin-left: 7px;
}

.st-zoom .zoom-plus {
    margin-left: 0;
}

.zoom-slider {
    position: relative;
    width: 93px;
    height: 4px;
    margin: 0 13px 0 11px;
    background: #dcdcde;
}

.zoom-thumb {
    position: absolute;
    left: 41px;
    top: -8px;
    width: 12px;
    height: 19px;
    background: #0d72d9;
    clip-path: polygon(0 0, 100% 0, 100% 80%, 50% 100%, 0 80%);
}

/* right side panel */
.panel {
    width: 400px;
    background: #fff;
    font-family: Lato, sans-serif;
    color: #3a3a48;
    display: flex;
    flex-direction: column;
}

.win-controls {
    height: 28px;
    display: flex;
    align-items: center;
    justify-content: flex-end;
    gap: 46.500px;
    padding-right: 26px;
}

.win-controls svg {
    width: 12px;
    height: 12px;
}

.section-head {
    height: 60px;
    display: grid;
    grid-template-columns: 60px 1fr 60px;
    align-items: center;
    text-align: center;
    font-weight: 700;
    font-size: 17px;
    color: #3a3a48;
    flex: none;
}

.section-head span {
    padding-bottom: 2px;
}

.section-head svg {
    width: 12px;
    height: 8px;
    margin-left: 24px;
    color: #55555f;
}

.search {
    height: 40px;
    width: 354px;
    margin: 9px 0 0 24px;
    border: 1px solid #c3c3d0;
    border-radius: 8px;
    display: flex;
    align-items: center;
    padding: 0 0 2px 14px;
    font-size: 15.500px;
    color: #74747f;
    flex: none;
}

.search svg {
    width: 16px;
    height: 16px;
    margin-right: 5px;
}

.list-wrap {
    height: 325px;
    display: flex;
    flex: none;
}

.list {
    width: 387px;
    height: 325px;
    overflow: hidden;
    padding-left: 24px;
}

.person {
    height: 51px;
    display: flex;
    align-items: center;
    font-size: 16px;
}

.person.first {
    margin-top: -33px;
}

.avatar {
    width: 34px;
    height: 34px;
    border-radius: 8px;
    color: #fff;
    font-weight: 700;
    font-size: 16px;
    line-height: 34px;
    text-align: center;
    flex: none;
}

.a-red { background: #c0392b; }
.a-blue { background: #2a80b9; }
.a-purple { background: #8e44ad; }
.a-orange { background: #d35400; }
.a-navy { background: #34495e; }
.a-green { background: #27ae60; }

.pname {
    margin-left: 14px;
    flex: 1;
}

.ic-mic {
    width: 20px;
    height: 20px;
    margin-right: 11px;
}

.ic-vid {
    width: 21px;
    height: 20px;
    margin-right: 17px;
}

.track {
    width: 10px;
    background: #f2f2f6;
    border-radius: 5px;
    display: flex;
    align-items: flex-end;
}

.thumb {
    display: block;
    width: 100%;
    background: #b1b1b8;
    border-radius: 5px;
}

.track-list {
    height: 322px;
    margin-top: 3px;
}

.track-list .thumb {
    height: 142px;
}

.actions {
    display: flex;
    gap: 38px;
    padding: 20px 0 0 39px;
    flex: none;
}

.act {
    height: 28px;
    line-height: 28px;
    background: #f1f1f6;
    border-radius: 8px;
    font-size: 15.500px;
    text-align: center;
}

.act-invite { width: 55px; }
.act-unmute { width: 96px; }
.act-raise { width: 94px; }

.rule {
    height: 1px;
    background: #ececf0;
    flex: none;
}

.rule-chat {
    margin: 20px 0 0 26px;
}

.chat-head {
    height: 55px;
    padding-bottom: 3px;
}

.chat-head span {
    padding-bottom: 0;
}

.chat-wrap {
    height: 323px;
    display: flex;
    flex: none;
}

.chat {
    width: 387px;
    padding: 22px 0 0 24px;
    overflow: hidden;
}

.msg-head {
    height: 22px;
    line-height: 23px;
    font-size: 14.700px;
    color: #82828e;
    white-space: nowrap;
}

.msg-head.second {
    margin-top: 16px;
}

.to {
    color: #0e71eb;
}

.dm {
    color: #ec6a66;
    margin-left: 8px;
    font-size: 15px;
}

.msg {
    height: 25px;
    line-height: 25px;
    font-size: 18.200px;
}

.track-chat {
    height: 322px;
}

.track-chat .thumb {
    height: 73px;
}

.rule-compose {
    margin: 3px 0 0 1px;
}

.compose {
    height: 44px;
    display: flex;
    align-items: center;
    padding: 14px 0 0 22px;
    font-size: 15.500px;
    flex: none;
}

.to-label {
    width: 29px;
}

.to-select {
    width: 78px;
    height: 29px;
    background: #f1f1f6;
    border-radius: 8px;
    display: flex;
    align-items: center;
    padding-left: 10px;
}

.to-select svg {
    width: 10px;
    height: 7px;
    margin-left: 7px;
    color: #222;
}

.to-dm {
    margin-left: 9px;
    color: #ec6a66;
    font-size: 15px;
}

.file-icon {
    width: 16px;
    height: 19px;
    margin-left: 26px;
}

.file-label {
    margin-left: 11px;
}

.more {
    width: 30px;
    height: 30px;
    margin-left: 27px;
    border: 1px solid #e3e3ea;
    border-radius: 8px;
    text-align: center;
    line-height: 24px;
    font-size: 15px;
}

.type-here {
    height: 22px;
    line-height: 22px;
    margin: 8px 0 0 22px;
    font-size: 15.500px;
    color: #82828e;
}

/* windows taskbar */
.taskbar {
    position: relative;
    height: 50px;
    display: flex;
    align-items: center;
    background: #1e1f1f;
}

.start {
    width: 20px;
    height: 20px;
    margin: 0 20px;
    flex: none;
}

.task-search {
    width: 430px;
    height: 50px;
    margin-right: -2px;
    display: flex;
    align-items: center;
    background: #333;
    border: 1px solid #5a5a5a;
    color: #d0d0d0;
    font-size: 19px;
    padding-left: 15px;
    flex: none;
}

.task-search svg {
    width: 22px;
    height: 24px;
    margin-right: 11px;
}

.task-icons {
    display: flex;
    flex: none;
    height: 50px;
}

.ti {
    width: 62px;
    height: 50px;
    display: flex;
    align-items: center;
    justify-content: center;
    flex: none;
}

.ti > svg {
    width: 30px;
    height: 30px;
}

.ti-active {
    background: #4d4d4d;
}

.ti .ti-zoom {
    width: 28px;
    height: 30px;
}

.chrome {
    display: block;
    width: 28px;
    height: 30px;
    border-radius: 50%;
    background:
        radial-gradient(circle, #4285f4 0 6px, #fff 6.500px 8px, transparent 8.500px),
        conic-gradient(from -60deg, #db4437 0 120deg, #f4b400 120deg 240deg, #0f9d58 240deg 360deg);
}

.pc-logo {
    position: relative;
    width: 26px;
    height: 30px;
    background: #000;
    border: 2px solid #e6e81c;
    color: #fff;
    padding-left: 3px;
}

.pc-logo b {
    display: block;
    font-size: 11px;
    line-height: 14px;
}

.pc-logo i {
    display: block;
    width: 10px;
    height: 2px;
    margin-top: 5px;
    background: #ddd;
}

/* open-app markers at the bottom of the bar */
.run {
    position: absolute;
    bottom: 0;
    height: 3px;
    background: #a8a8a8;
}

.run-files { left: 929px; width: 51px; }
.run-chrome { left: 1115px; width: 51px; }
.run-pc { left: 1301px; width: 51px; }
.run-zoom { left: 1358px; width: 61px; }

.tray {
    margin-left: auto;
    display: flex;
    align-items: center;
    color: #e6e6e6;
    font-size: 14px;
    flex: none;
}

.tray-ic {
    width: 16px;
    height: 18px;
    margin-right: 13.500px;
}

.tray-last {
    margin-right: 17.500px;
}

.eng {
    width: 41px;
    font-size: 15px;
}

.clock {
    width: 86px;
    margin-right: 17px;
    text-align: center;
    line-height: 23px;
    font-size: 14.500px;
}

.notif {
    width: 20px;
    height: 24px;
    margin-right: 31px;
}
```
